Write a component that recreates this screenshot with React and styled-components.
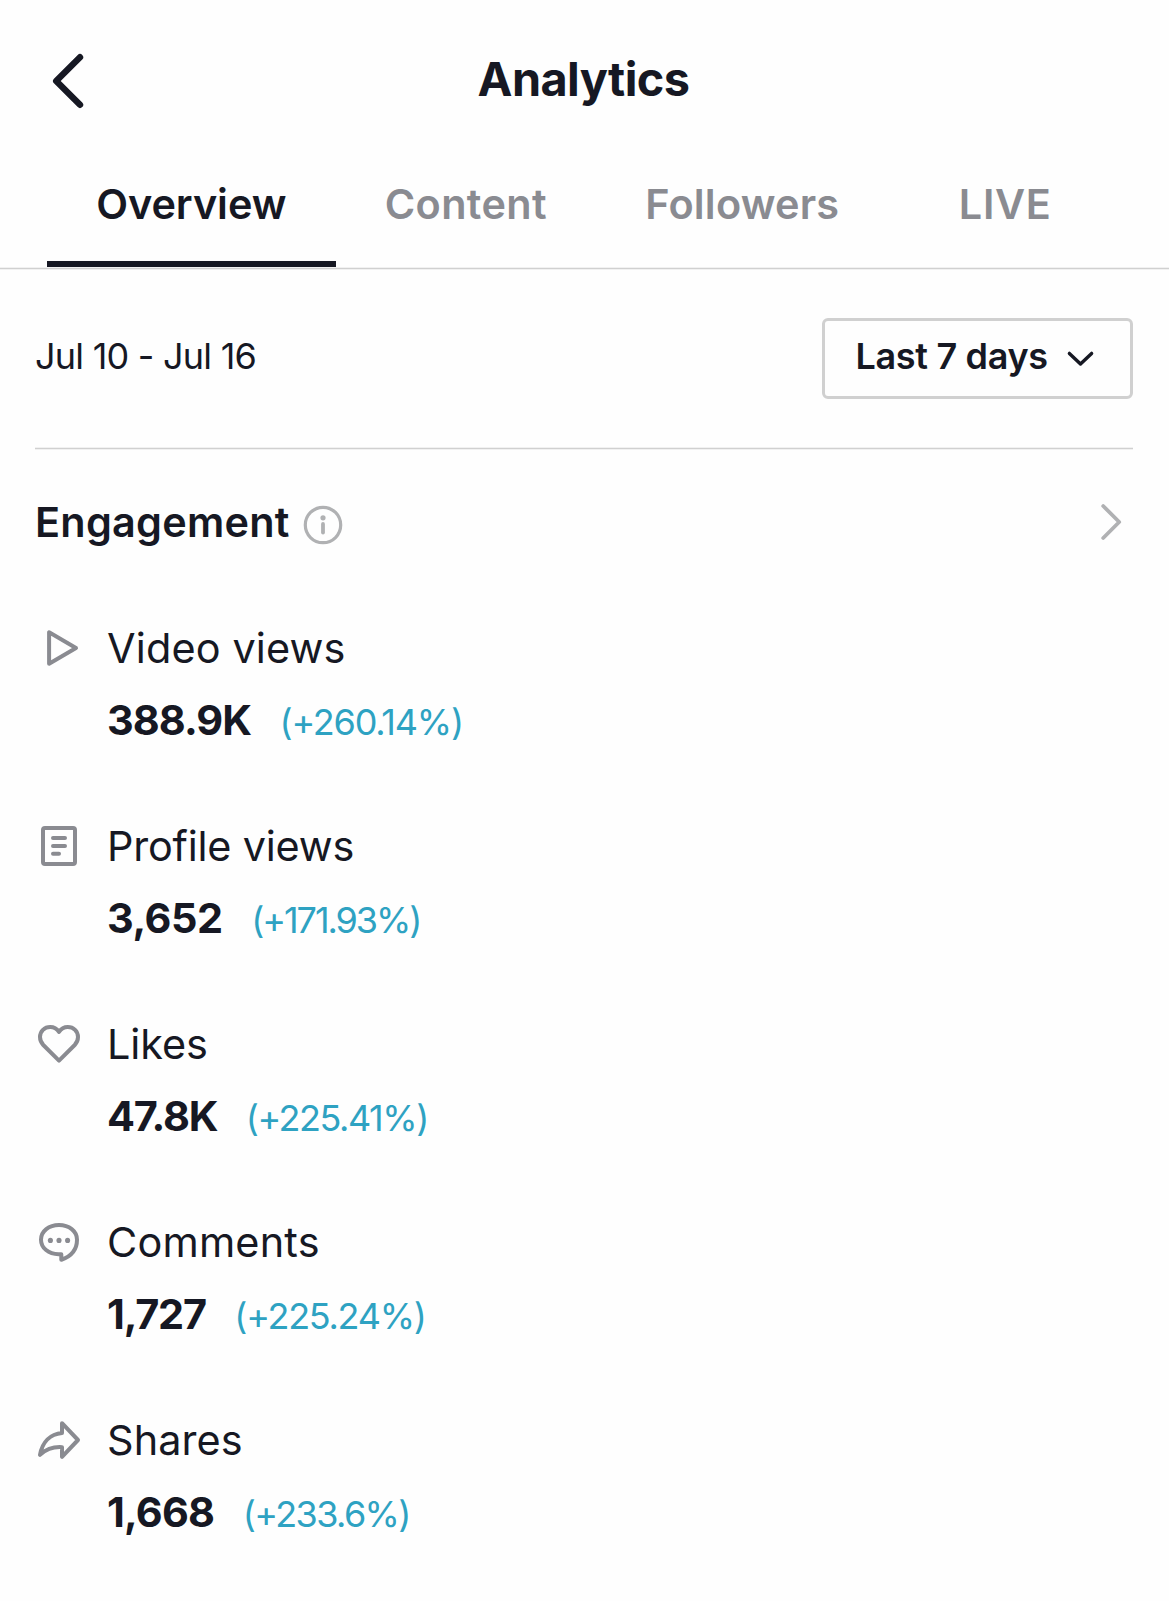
import React from "react";
import styled, { createGlobalStyle } from "styled-components";

const ink = "#161823";
const muted = "#8a8b91";
const line = "#d0d0d0";
const softEdge = "0 1px 0 #f1f1f1, inset 0 -1px 0 #f1f1f1";

const GlobalStyle = createGlobalStyle`
  * { box-sizing: border-box; }
  body {
    margin: 0;
    background: #fefefe;
    color: ${ink};
    font-family: Inter, "Liberation Sans", sans-serif;
  }
`;

const Page = styled.main`
  width: 1169px;
  min-height: 1601px;
  background: #fefefe;
  display: flex;
  flex-direction: column;
`;

const Text = styled.span`
  white-space: pre;
  letter-spacing: ${(p) => p.$track || 0}px;
`;

const Header = styled.header`
  height: 158px;
  padding: 0 49px 0 47px;
  display: grid;
  grid-template-columns: 100px 1fr 100px;
  align-items: center;
`;

const BackButton = styled.button`
  border: 0;
  padding: 4px 0 0;
  background: none;
  display: flex;
`;

const Title = styled.h1`
  margin: 0;
  text-align: center;
  font-size: 46.8px;
  line-height: 56px;
  font-weight: 700;
`;

const Tabs = styled.nav`
  display: flex;
  padding: 0 47px 1px;
  border-bottom: 1px solid ${line};
  box-shadow: ${softEdge};
`;

const Tab = styled.button`
  flex: ${(p) => (p.$grow ? "1" : "none")};
  border: 0;
  border-bottom: 6px solid ${(p) => (p.$active ? ink : "transparent")};
  padding: 21px ${(p) => (p.$grow ? 0 : 49.2)}px 32px;
  background: none;
  color: ${(p) => (p.$active ? ink : muted)};
  font-family: inherit;
  font-size: 41.4px;
  line-height: 50px;
  font-weight: 600;
`;

const Body = styled.div`
  padding: 0 36px 0 35px;
`;

const RangeRow = styled.section`
  display: flex;
  justify-content: space-between;
  align-items: center;
  padding: 49px 0;
  border-bottom: 1px solid ${line};
  box-shadow: ${softEdge};
`;

const DateRange = styled.div`
  padding-bottom: 5px;
  font-size: 36px;
  line-height: 44px;
`;

const Select = styled.button`
  width: 311px;
  height: 81px;
  border: 3px solid ${line};
  border-radius: 6px;
  padding: 0 0 5px 30.5px;
  background: none;
  color: ${ink};
  display: flex;
  align-items: center;
  gap: 18px;
  font-family: inherit;
  font-size: 36px;
  line-height: 44px;
  font-weight: 600;

  svg { margin-top: 5px; }
`;

const SectionHeader = styled.div`
  display: flex;
  align-items: center;
  margin: 48px 10px 76px 0;
  height: 50px;
`;

const SectionTitle = styled.h2`
  margin: 0 13px 0 0;
  font-size: 41.4px;
  line-height: 50px;
  font-weight: 600;
`;

const InfoIcon = styled.svg`
  margin-top: 6px;
`;

const MoreIcon = styled.svg`
  margin-left: auto;
`;

const MetricList = styled.div`
  display: flex;
  flex-direction: column;
  gap: 76px;
`;

const Metric = styled.article`
  display: grid;
  grid-template-columns: 48px 1fr;
  column-gap: 24px;
  row-gap: 22px;
  line-height: 50px;
`;

const MetricIcon = styled.svg.attrs({ viewBox: "0 0 48 48", width: 48, height: 48 })`
  align-self: center;
  fill: none;
  stroke: ${muted};
  stroke-width: 4;
  stroke-linecap: round;
  stroke-linejoin: round;
`;

const Label = styled.div`
  font-size: 41.4px;
`;

const Figures = styled.div`
  grid-column: 2;
  display: flex;
  align-items: baseline;
  height: 50px;
`;

const Value = styled.div`
  font-size: 41.4px;
  font-weight: 700;
  margin-right: 28.5px;
`;

const Change = styled.div`
  font-size: 36px;
  color: #2ea2c2;
`;

const icons = {
  play: <path d="M14.1 8.3V39.7L41 24Z" />,
  profile: (
    <>
      <rect x="8" y="6" width="32" height="36" rx="2" />
      <path d="M18 16H30M18 24H30M18 31.8H24" />
    </>
  ),
  heart: (
    <path d="M24 12C21.8 8.6 18.6 7 15.2 7C9.4 7 5 11.4 5 17.1C5 20.2 6.2 22.8 8.3 25L24 40.6L39.7 25C41.8 22.8 43 20.2 43 17.1C43 11.4 38.6 7 32.8 7C29.4 7 26.2 8.6 24 12Z" />
  ),
  comment: (
    <>
      <path d="M24 7C14 7 6 13 6 21.7C6 30 13.6 36 23.6 36.2H26.3V41.8C36.4 38.2 42 30.8 42 21.7C42 13 34 7 24 7Z" />
      <g fill={muted} stroke="none">
        <circle cx="15.4" cy="22.4" r="2.55" />
        <circle cx="24" cy="22.4" r="2.55" />
        <circle cx="32.6" cy="22.4" r="2.55" />
      </g>
    </>
  ),
  share: (
    <path d="M27 7.2L43 24L27 40.8V31.2C18 30.6 11 33.4 5 38.8C7.4 26 15.4 18 27 17Z" />
  ),
};

const tabs = [
  { name: "Overview", track: -0.05, active: true },
  { name: "Content", track: 0.35 },
  { name: "Followers", track: 0.2 },
  { name: "LIVE", track: 0.7, grow: true },
];

const metrics = [
  { icon: "play", label: ["Video views", 0.15], value: ["388.9K", -0.95], change: ["(+260.14%)", -1.2] },
  { icon: "profile", label: ["Profile views", -0.2], value: ["3,652", -0.45], change: ["(+171.93%)", -2.05] },
  { icon: "heart", label: ["Likes", -0.1], value: ["47.8K", -1.2], change: ["(+225.41%)", -1.45] },
  { icon: "comment", label: ["Comments", 0.2], value: ["1,727", -1.2], change: ["(+225.24%)", -1.28] },
  { icon: "share", label: ["Shares", 0.1], value: ["1,668", -0.8], change: ["(+233.6%)", -1.6] },
];

export default function App() {
  return (
    <Page>
      <GlobalStyle />
      <Header>
        <BackButton aria-label="Back">
          <svg width="44" height="60" viewBox="0 0 44 60" fill="none" stroke={ink} strokeWidth="6.4" strokeLinecap="round" strokeLinejoin="round">
            <path d="M33 6.2L9.2 30L33 53.8" />
          </svg>
        </BackButton>
        <Title><Text $track={-0.57}>Analytics</Text></Title>
      </Header>
      <Tabs>
        {tabs.map((t) => (
          <Tab key={t.name} $active={t.active} $grow={t.grow}>
            <Text $track={t.track}>{t.name}</Text>
          </Tab>
        ))}
      </Tabs>
      <Body>
        <RangeRow>
          <DateRange><Text $track={-0.76}>Jul 10 - Jul 16</Text></DateRange>
          <Select>
            <Text $track={-0.33}>Last 7 days</Text>
            <svg width="29" height="20" viewBox="0 0 29 20" fill="none" stroke={ink} strokeWidth="3.4" strokeLinecap="round" strokeLinejoin="round">
              <path d="M3.4 4.4L14.5 15L25.6 4.4" />
            </svg>
          </Select>
        </RangeRow>
        <SectionHeader>
          <SectionTitle><Text $track={0.25}>Engagement</Text></SectionTitle>
          <InfoIcon width="40" height="40" viewBox="0 0 40 40" fill="none" stroke="#b0b1b3">
            <circle cx="20" cy="20" r="17.7" strokeWidth="3.2" />
            <path d="M20 19V27.5" strokeWidth="3.8" strokeLinecap="round" />
            <circle cx="20" cy="12.8" r="2.6" fill="#b0b1b3" stroke="none" />
          </InfoIcon>
          <MoreIcon width="24" height="40" viewBox="0 0 24 40" fill="none" stroke="#b0b1b3" strokeWidth="3.8" strokeLinecap="round" strokeLinejoin="round">
            <path d="M4.2 4L20.2 20L4.2 36" />
          </MoreIcon>
        </SectionHeader>
        <MetricList>
          {metrics.map((m) => (
            <Metric key={m.icon}>
              <MetricIcon>{icons[m.icon]}</MetricIcon>
              <Label><Text $track={m.label[1]}>{m.label[0]}</Text></Label>
              <Figures>
                <Value><Text $track={m.value[1]}>{m.value[0]}</Text></Value>
                <Change><Text $track={m.change[1]}>{m.change[0]}</Text></Change>
              </Figures>
            </Metric>
          ))}
        </MetricList>
      </Body>
    </Page>
  );
}
